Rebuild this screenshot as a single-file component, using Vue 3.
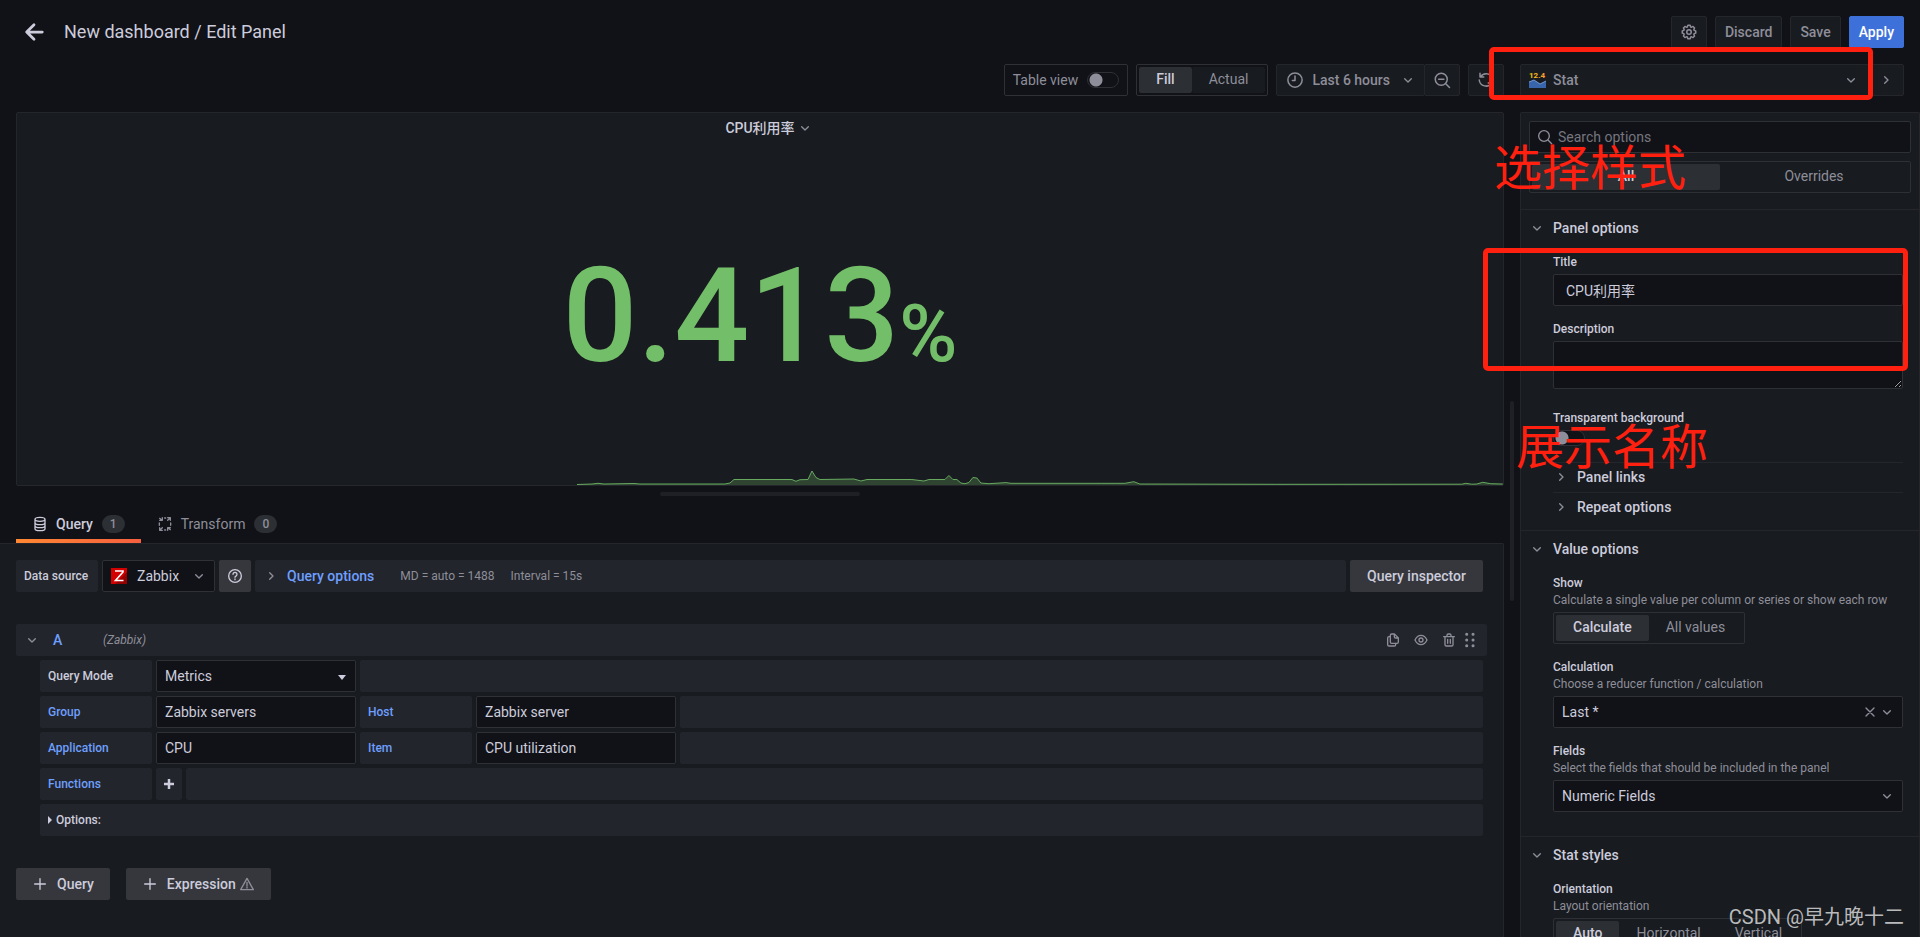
<script setup>
import { h, ref } from 'vue'

const shapes = {
  back: { line: 'M21 12H4M12 4 4 12l8 8', w: 3 },
  down: { line: 'M7 10l5 5 5-5', w: 2 },
  right: { line: 'M10 7l5 5-5 5', w: 2 },
  close: { line: 'M6 6l12 12M18 6 6 18', w: 2 },
  plus: { line: 'M12 4v16M4 12h16', w: 2 },
  clock: { line: 'M12 2.500a9.500 9.500 0 1 0 0 19a9.500 9.500 0 1 0 0-19M12 6.500v6H8.500', w: 2 },
  search: { line: 'M10.500 2.500a8 8 0 1 0 0 16a8 8 0 1 0 0-16M16.500 16.500l5.500 5.500', w: 2 },
  zoomOut: { line: 'M11 3a8 8 0 1 0 0 16a8 8 0 1 0 0-16M17 17l5 5M7.500 11h7', w: 2 },
  sync: { line: 'M4 3v5h5M4.500 8A9 9 0 0 1 20.500 9M20 21v-5h-5M19.500 16A9 9 0 0 1 3 12', w: 2 },
  database: {
    line: 'M12 2c4.500 0 7.500 1.200 7.500 3s-3 3-7.500 3s-7.500-1.200-7.500-3s3-3 7.500-3M4.500 5v14c0 1.800 3 3 7.500 3s7.500-1.200 7.500-3v-14M4.500 10c0 1.800 3 3 7.500 3s7.500-1.200 7.500-3M4.500 14.500c0 1.800 3 3 7.500 3s7.500-1.200 7.500-3',
    w: 2,
  },
  transform: {
    line: 'M8 2.500v4H4M4 3.500l3 3M16 2.500h4v4M20 2.500l-4 4M4 17.500v4h4M4 21.500l4-4M20 20.500l-3-3M16 21.500v-4h4M11.500 3h1.500M3.500 10.500v3.500M20.500 10.500v3.500M11.500 21h1.500',
    w: 2,
  },
  help: {
    line: 'M12 2.500a9.500 9.500 0 1 0 0 19a9.500 9.500 0 1 0 0-19M9 9.500a3 3 0 1 1 4.500 2.600c-1 .6-1.500 1-1.500 1.900M12 16.500v1',
    w: 2,
  },
  warning: { line: 'M12 3.500 2.500 20.500h19zM12 9.500v5M12 16.500v1.500', w: 2 },
  gear: {
    fill: 'M21.32,9.55l-1.89-.63.89-1.78A1,1,0,0,0,20.13,6L18,3.87a1,1,0,0,0-1.15-.19l-1.78.89-.63-1.89A1,1,0,0,0,13.500,2h-3a1,1,0,0,0-.95.68L8.92,4.57,7.14,3.68A1,1,0,0,0,6,3.87L3.87,6a1,1,0,0,0-.19,1.15l.89,1.78-1.89.63A1,1,0,0,0,2,10.500v3a1,1,0,0,0,.68.95l1.89.63-.89,1.78A1,1,0,0,0,3.87,18L6,20.13a1,1,0,0,0,1.15.19l1.78-.89.63,1.89a1,1,0,0,0,.95.68h3a1,1,0,0,0,.95-.68l.63-1.89,1.78.89A1,1,0,0,0,18,20.13L20.13,18a1,1,0,0,0,.19-1.15l-.89-1.78,1.89-.63A1,1,0,0,0,22,13.500v-3A1,1,0,0,0,21.32,9.55ZM20,12.78l-1.2.4A2,2,0,0,0,17.64,16l.57,1.14-1.1,1.1L16,17.64a2,2,0,0,0-2.79,1.16l-.4,1.2H11.22l-.4-1.2A2,2,0,0,0,8,17.64l-1.14.57-1.1-1.1L6.36,16A2,2,0,0,0,5.2,13.18L4,12.78V11.22l1.2-.4A2,2,0,0,0,6.36,8L5.79,6.89l1.1-1.1L8,6.36A2,2,0,0,0,10.82,5.2l.4-1.2h1.56l.4,1.2A2,2,0,0,0,16,6.36l1.14-.57,1.1,1.1L17.64,8a2,2,0,0,0,1.16,2.79l1.2.4ZM12,8a4,4,0,1,0,4,4A4,4,0,0,0,12,8Zm0,6a2,2,0,1,1,2-2A2,2,0,0,1,12,14Z',
  },
  copy: {
    fill: 'M21,8.94a1.31,1.31,0,0,0-.06-.27l0-.09a1.07,1.07,0,0,0-.19-.28h0l-6-6h0a1.07,1.07,0,0,0-.28-.19.32.32,0,0,0-.09,0A.88.88,0,0,0,14.05,2H10A3,3,0,0,0,7,5V6H6A3,3,0,0,0,3,9V19a3,3,0,0,0,3,3h8a3,3,0,0,0,3-3V18h1a3,3,0,0,0,3-3V9S21,9,21,8.94ZM15,5.41,17.59,8H16a1,1,0,0,1-1-1ZM15,19a1,1,0,0,1-1,1H6a1,1,0,0,1-1-1V9A1,1,0,0,1,6,8H7v7a3,3,0,0,0,3,3h5Zm4-4a1,1,0,0,1-1,1H10a1,1,0,0,1-1-1V5a1,1,0,0,1,1-1h3V7a3,3,0,0,0,3,3h3Z',
  },
  eye: {
    fill: 'M21.92,11.6C19.9,6.91,16.1,4,12,4S4.1,6.91,2.08,11.6a1,1,0,0,0,0,.8C4.1,17.09,7.9,20,12,20s7.9-2.91,9.92-7.6A1,1,0,0,0,21.92,11.6ZM12,18c-3.17,0-6.17-2.29-7.9-6C5.83,8.29,8.83,6,12,6s6.17,2.29,7.9,6C18.17,15.71,15.17,18,12,18ZM12,8a4,4,0,1,0,4,4A4,4,0,0,0,12,8Zm0,6a2,2,0,1,1,2-2A2,2,0,0,1,12,14Z',
  },
  trash: {
    fill: 'M10,18a1,1,0,0,0,1-1V11a1,1,0,0,0-2,0v6A1,1,0,0,0,10,18ZM20,6H16V5a3,3,0,0,0-3-3H11A3,3,0,0,0,8,5V6H4A1,1,0,0,0,4,8H5V19a3,3,0,0,0,3,3h8a3,3,0,0,0,3-3V8h1a1,1,0,0,0,0-2ZM10,5a1,1,0,0,1,1-1h2a1,1,0,0,1,1,1V6H10Zm7,14a1,1,0,0,1-1,1H8a1,1,0,0,1-1-1V8H17Zm-3-1a1,1,0,0,0,1-1V11a1,1,0,0,0-2,0v6A1,1,0,0,0,14,18Z',
  },
  drag: {
    line: 'M7 3.500h.1M16.500 3.500h.1M7 12h.1M16.500 12h.1M7 20.500h.1M16.500 20.500h.1',
    w: 4.5,
  },
}

function Icon(props) {
  const s = shapes[props.name]
  const size = props.size || 16
  return h('svg', { width: size, height: size, viewBox: '0 0 24 24', 'aria-hidden': 'true' }, [
    s.fill
      ? h('path', { d: s.fill, fill: 'currentColor' })
      : h('path', {
          d: s.line,
          fill: 'none',
          stroke: 'currentColor',
          'stroke-width': s.w,
          'stroke-linecap': 'round',
          'stroke-linejoin': 'round',
        }),
  ])
}
Icon.props = ['name', 'size']

const tableView = ref(false)
const transparent = ref(false)
const fit = ref('Fill')
const scope = ref('All')
const show = ref('Calculate')
const orientation = ref('Auto')
const title = ref('CPU利用率')
const description = ref('')
const search = ref('')

const queryRows = ref([
  [
    { id: 'group', label: 'Group', value: 'Zabbix servers' },
    { id: 'host', label: 'Host', value: 'Zabbix server' },
  ],
  [
    { id: 'application', label: 'Application', value: 'CPU' },
    { id: 'item', label: 'Item', value: 'CPU utilization' },
  ],
])

const spark =
  '0,14.500 15,14 21,13.300 27,14 57,13.500 63,14 148,14 153,13 157,9.500 215,9.500 219,11.300 223,9.700 231,9.500 235,1 239,7.500 243,9.500 277,9 284,11 290,9.500 335,9.500 347,11 352,9.500 368,9.500 372,5.500 376,9.500 380,9.500 384,13 388,13.700 392,12.500 396,7.500 400,8 404,13 412,13.700 429,12.600 434,13.300 525,13.300 540,13.300 548,13.300 557,11.700 563,14 700,14.300 885,14.200 889,13.300 895,14.200 900,14 906,12.300 914,13.700 926,14'
</script>

<template>
  <div class="editor">
    <header class="top">
      <button class="bare back" aria-label="Go back"><Icon name="back" :size="22" /></button>
      <h1>New dashboard / Edit Panel</h1>
      <div class="actions">
        <button class="btn icon-btn" aria-label="Dashboard settings"><Icon name="gear" :size="18" /></button>
        <button class="btn">Discard</button>
        <button class="btn">Save</button>
        <button class="btn primary">Apply</button>
      </div>
    </header>

    <div class="body">
      <main class="left">
        <div class="toolbar">
          <label class="table-view">Table view <input v-model="tableView" type="checkbox" class="switch" /></label>
          <div class="radios" role="radiogroup" aria-label="Panel size">
            <label v-for="o in ['Fill', 'Actual']" :key="o" class="tinted">
              <input v-model="fit" type="radio" name="fit" :value="o" /><span>{{ o }}</span>
            </label>
          </div>
          <div class="joined">
            <button class="btn time"><Icon name="clock" :size="18" /><span>Last 6 hours</span><Icon name="down" /></button>
            <button class="btn icon-btn" aria-label="Zoom out"><Icon name="zoomOut" :size="18" /></button>
          </div>
          <button class="btn icon-btn" aria-label="Refresh"><Icon name="sync" :size="18" /></button>
        </div>

        <section class="panel">
          <h2>CPU利用率 <Icon name="down" /></h2>
          <div class="value">0.413<small>%</small></div>
          <svg class="spark" viewBox="0 -1 926 16" preserveAspectRatio="none" aria-hidden="true">
            <polygon :points="'0,16 ' + spark + ' 926,16'" fill="#73bf69" fill-opacity="0.25" />
            <polyline :points="spark" fill="none" stroke="#73bf69" stroke-opacity="0.850" />
          </svg>
        </section>

        <div class="tabs-area">
          <div class="handle"></div>
          <nav class="tabs">
            <a href="#query" class="tab active"><Icon name="database" /><span>Query</span><i>1</i></a>
            <a href="#transform" class="tab"><Icon name="transform" /><span>Transform</span><i>0</i></a>
          </nav>
        </div>

        <section class="pane">
          <div class="source-row">
            <label for="ds" class="cell ds-label">Data source</label>
            <div class="pick ds">
              <svg class="zbx" width="16" height="16" viewBox="0 0 16 16" aria-hidden="true">
                <rect width="16" height="16" fill="#d40000" />
                <path d="M4 16 16 4v12z" fill="#970000" />
                <path d="M4 3h8v1L4.500 12.500H12.500" fill="none" stroke="#fff" stroke-width="1.600" />
              </svg>
              <select id="ds"><option>Zabbix</option></select>
              <Icon name="down" class="caret" />
            </div>
            <button class="solid help" aria-label="Data source help"><Icon name="help" /></button>
            <button class="cell options-bar">
              <Icon name="right" /><b>Query options</b><span>MD = auto = 1488</span><span>Interval = 15s</span>
            </button>
            <button class="solid inspector">Query inspector</button>
          </div>

          <div class="query-head">
            <Icon name="down" /><strong>A</strong><em>(Zabbix)</em>
            <div class="tools">
              <button class="bare" aria-label="Duplicate query"><Icon name="copy" /></button>
              <button class="bare" aria-label="Toggle query"><Icon name="eye" /></button>
              <button class="bare" aria-label="Remove query"><Icon name="trash" /></button>
              <Icon name="drag" class="grip" />
            </div>
          </div>

          <div class="query-form">
            <div class="row">
              <label for="mode" class="cell name">Query Mode</label>
              <div class="pick field">
                <select id="mode"><option>Metrics</option></select>
                <span class="tri"></span>
              </div>
              <div class="cell rest"></div>
            </div>
            <div v-for="(row, r) in queryRows" :key="r" class="row">
              <template v-for="f in row" :key="f.id">
                <label :for="f.id" class="cell name blue">{{ f.label }}</label>
                <input :id="f.id" v-model="f.value" type="text" class="box field" />
              </template>
              <div class="cell rest"></div>
            </div>
            <div class="row">
              <span class="cell name blue">Functions</span>
              <button class="cell add" aria-label="Add function">
                <svg width="10" height="10" viewBox="0 0 10 10" aria-hidden="true"><path d="M5 0v10M0 5h10" stroke="currentColor" stroke-width="2.500" /></svg>
              </button>
              <div class="cell rest"></div>
            </div>
            <button class="cell more"><span class="tri side"></span>Options:</button>
          </div>

          <div class="adders">
            <button class="solid"><Icon name="plus" />Query</button>
            <button class="solid"><Icon name="plus" />Expression<Icon name="warning" class="warn" /></button>
          </div>
        </section>
      </main>

      <div class="splitter"><div></div></div>

      <aside class="right">
        <div class="toolbar viz">
          <button class="btn viz-btn">
            <svg width="17" height="17" viewBox="0 0 17 17" aria-hidden="true">
              <defs>
                <linearGradient id="gold"><stop stop-color="#f2cc0c" /><stop offset="1" stop-color="#ff9830" /></linearGradient>
              </defs>
              <text x="0" y="7" font-family="Roboto" font-size="8" font-weight="700" fill="url(#gold)">12.4</text>
              <path d="M0 11l5-2 6 4 6-3v7H0z" fill="#3865ab" />
              <path d="M0 11l5-2 6 4 6-3" fill="none" stroke="#84aff1" stroke-width="0.800" />
            </svg>
            <span>Stat</span><Icon name="down" />
          </button>
          <button class="btn collapse" aria-label="Close options"><Icon name="right" /></button>
        </div>

        <div class="options">
          <div class="filters">
            <div class="search">
              <Icon name="search" />
              <input v-model="search" type="text" class="box" placeholder="Search options" aria-label="Search options" />
            </div>
            <div class="radios full" role="radiogroup" aria-label="Option scope">
              <label v-for="o in ['All', 'Overrides']" :key="o">
                <input v-model="scope" type="radio" name="scope" :value="o" /><span>{{ o }}</span>
              </label>
            </div>
          </div>

          <section class="group">
            <h3><Icon name="down" />Panel options</h3>
            <div class="group-body">
              <div class="item">
                <label for="p-title">Title</label>
                <input id="p-title" v-model="title" type="text" class="box wide" />
              </div>
              <div class="item">
                <label for="p-desc">Description</label>
                <textarea id="p-desc" v-model="description" class="box"></textarea>
              </div>
              <div class="item">
                <label for="p-bg">Transparent background</label>
                <input id="p-bg" v-model="transparent" type="checkbox" class="switch" />
              </div>
              <h4><Icon name="right" />Panel links</h4>
              <h4><Icon name="right" />Repeat options</h4>
            </div>
          </section>

          <section class="group">
            <h3><Icon name="down" />Value options</h3>
            <div class="group-body">
              <div class="item">
                <span class="label">Show</span>
                <p>Calculate a single value per column or series or show each row</p>
                <div class="radios" role="radiogroup" aria-label="Show">
                  <label v-for="o in ['Calculate', 'All values']" :key="o">
                    <input v-model="show" type="radio" name="show" :value="o" /><span>{{ o }}</span>
                  </label>
                </div>
              </div>
              <div class="item">
                <label for="calc">Calculation</label>
                <p>Choose a reducer function / calculation</p>
                <div class="pick">
                  <select id="calc"><option>Last *</option></select>
                  <Icon name="close" class="clear" /><Icon name="down" class="caret" />
                </div>
              </div>
              <div class="item">
                <label for="fields">Fields</label>
                <p>Select the fields that should be included in the panel</p>
                <div class="pick">
                  <select id="fields"><option>Numeric Fields</option></select>
                  <Icon name="down" class="caret" />
                </div>
              </div>
            </div>
          </section>

          <section class="group">
            <h3><Icon name="down" />Stat styles</h3>
            <div class="group-body">
              <div class="item">
                <span class="label">Orientation</span>
                <p>Layout orientation</p>
                <div class="radios" role="radiogroup" aria-label="Orientation">
                  <label v-for="o in ['Auto', 'Horizontal', 'Vertical']" :key="o">
                    <input v-model="orientation" type="radio" name="orientation" :value="o" /><span>{{ o }}</span>
                  </label>
                </div>
              </div>
            </div>
          </section>
        </div>
      </aside>
    </div>

    <div class="mark mark-style"></div>
    <div class="note note-style">选择样式</div>
    <div class="mark mark-name"></div>
    <div class="note note-name">展示名称</div>
    <div class="watermark">CSDN @早九晚十二</div>
  </div>
</template>

<style>
body {
  background: #111217;
}
</style>

<style scoped>
.editor,
.editor * {
  box-sizing: border-box;
}
.editor {
  position: relative;
  display: flex;
  flex-direction: column;
  height: 100vh;
  overflow: hidden;
  background: #111217;
  color: #ccccdc;
  font-family: Roboto, "Noto Sans CJK SC", sans-serif;
  font-size: 14px;
  line-height: 20px;
}
button,
input,
select,
textarea {
  font: inherit;
  color: inherit;
  margin: 0;
}
button {
  cursor: pointer;
  white-space: nowrap;
}
svg {
  flex: none;
  display: block;
}
h1, h2, h3, h4, p {
  margin: 0;
  font-weight: 500;
}
.bare {
  border: 0;
  padding: 0;
  background: none;
  color: inherit;
}
.top {
  display: flex;
  align-items: center;
  padding: 16px 16px 16px 23px;
}
.top h1 {
  margin-left: 19px;
  font-size: 18px;
  font-weight: 400;
}
.actions {
  display: flex;
  gap: 8px;
  margin-left: auto;
}
.btn {
  display: flex;
  align-items: center;
  height: 32px;
  padding: 0 9px 1px;
  border: 1px solid #24262c;
  border-radius: 2px;
  background: #181b1f;
  color: #8e8e9a;
  font-weight: 500;
}
.icon-btn {
  width: 36px;
  padding: 0;
  justify-content: center;
}
.primary {
  border-color: #3d71d9;
  background: #3d71d9;
  color: #fff;
}
.body {
  flex: 1;
  display: flex;
  min-height: 0;
}
.left {
  flex: 1;
  min-width: 0;
  display: flex;
  flex-direction: column;
}
.toolbar {
  display: flex;
  justify-content: flex-end;
  gap: 8px;
  margin-bottom: 16px;
}
.table-view {
  display: flex;
  align-items: center;
  gap: 9px;
  height: 32px;
  padding: 0 8px;
  border: 1px solid #2e3036;
  border-radius: 2px;
  color: #8e8e9a;
}
.switch {
  appearance: none;
  display: block;
  width: 32px;
  height: 16px;
  border: 1px solid #2e3036;
  border-radius: 8px;
  background: radial-gradient(circle at 8px 7px, #8e8e9a 6px, transparent 7px) #111217;
}
.radios {
  display: inline-flex;
  height: 32px;
  padding: 2px;
  border: 1px solid #2e3036;
  border-radius: 2px;
}
.radios label {
  position: relative;
  display: flex;
}
.radios input {
  position: absolute;
  inset: 0;
  opacity: 0;
}
.radios span {
  flex: 1;
  padding: 2px 17px 4px;
  border-radius: 2px;
  color: #8e8e9a;
  text-align: center;
}
.radios .tinted span {
  background: #181b1f;
}
.radios input:checked + span {
  background: #2c2f34;
  color: #ccccdc;
  font-weight: 500;
}
.radios.full {
  display: flex;
}
.full label {
  flex: 1;
}
.joined {
  display: flex;
}
.joined .btn + .btn {
  margin-left: -1px;
}
.time {
  padding-right: 8px;
}
.time span {
  margin: 0 10px 0 8px;
}
.panel {
  flex: 372 1 0;
  min-height: 0;
  display: flex;
  flex-direction: column;
  margin-left: 16px;
  border: 1px solid #24262c;
  border-radius: 2px;
  background: #181b1f;
}
.panel h2 {
  display: flex;
  justify-content: center;
  align-items: center;
  gap: 2px;
  padding: 5px 0 0 18px;
  font-size: 14px;
}
.panel h2 svg,
.query-head > svg,
.group svg,
.options-bar svg {
  color: #8e8e9a;
}
.value {
  flex: 1;
  display: flex;
  align-items: baseline;
  justify-content: center;
  padding-top: 112px;
  color: #73bf69;
  font-size: 132px;
  font-weight: 500;
  line-height: 132px;
}
.value small {
  font-size: 79px;
}
.spark {
  align-self: flex-end;
  width: 62.3%;
  height: 16px;
}
.tabs-area {
  display: flex;
  flex-direction: column;
  height: 57px;
  padding: 6px 0 0 16px;
}
.handle {
  align-self: center;
  width: 200px;
  height: 4px;
  border-radius: 2px;
  background: #1f2025;
}
.tabs {
  display: flex;
  flex: 1;
}
.tab {
  display: flex;
  align-items: center;
  padding: 12px 16px 0;
  color: #8e8e9a;
  text-decoration: none;
  border-bottom: 4px solid transparent;
}
.tab span {
  margin: 0 9px 0 8px;
}
.tab i {
  padding: 0 8px;
  border-radius: 9px;
  background: #2c2f34;
  color: #8e8e9a;
  font-size: 12px;
  font-style: normal;
  font-weight: 500;
  line-height: 18px;
}
.tab.active {
  color: #ccccdc;
  font-weight: 500;
  border-image: linear-gradient(90deg, #ff8833, #f55f3e) 0 0 4 0;
}
.pane {
  flex: 377 1 0;
  min-height: 0;
  padding: 16px 16px 0;
  border: 1px solid #24262c;
  border-width: 1px 1px 0 0;
  border-radius: 0 2px 0 0;
  background: #181b1f;
}
.cell {
  display: flex;
  align-items: center;
  height: 32px;
  padding: 0 8px;
  border: 0;
  border-radius: 2px;
  background: #22252b;
  font-size: 12px;
  font-weight: 500;
}
.source-row,
.row {
  display: flex;
  gap: 4px;
  margin-right: 4px;
}
.ds-label {
  width: 82px;
}
.pick {
  position: relative;
  height: 32px;
}
.pick select,
.box {
  appearance: none;
  display: block;
  width: 100%;
  height: 32px;
  padding: 0 8px;
  border: 1px solid #2e3036;
  border-radius: 2px;
  background: #111217;
  outline: 0;
}
.pick .caret,
.pick .clear,
.pick .tri,
.pick .zbx {
  position: absolute;
  top: 8px;
  right: 8px;
  pointer-events: none;
  color: #8e8e9a;
}
.pick .clear {
  right: 25px;
}
.pick .zbx {
  left: 9px;
}
.ds select {
  width: 113px;
  padding-left: 34px;
}
.solid {
  display: flex;
  align-items: center;
  height: 32px;
  padding: 0 16px 1px;
  border: 0;
  border-radius: 2px;
  background: #35373c;
  font-weight: 500;
}
.help {
  padding: 0 8px;
}
.inspector {
  padding: 0 17px 1px;
}
.options-bar {
  flex: 1;
  font-weight: 400;
  color: #8e8e9a;
}
.options-bar b {
  margin: 0 10px 0 8px;
  color: #6e9fff;
  font-size: 14px;
  font-weight: 500;
}
.options-bar span {
  margin-left: 16px;
}
.query-head {
  display: flex;
  align-items: center;
  height: 32px;
  margin-top: 32px;
  padding: 0 9px 0 8px;
  border-radius: 2px;
  background: #22252b;
}
.query-head strong {
  width: 42px;
  margin-left: 13px;
  color: #6e9fff;
  font-weight: 500;
}
.query-head em {
  margin-left: 8px;
  color: #8e8e9a;
  font-size: 12px;
}
.tools {
  display: flex;
  align-items: center;
  gap: 12px;
  margin-left: auto;
  color: #8e8e9a;
}
.grip {
  margin-left: -7px;
}
.query-form {
  display: flex;
  flex-direction: column;
  gap: 4px;
  margin: 4px 0 0 24px;
}
.name {
  width: 112px;
}
.field {
  width: 200px;
}
.rest {
  flex: 1;
}
.blue {
  color: #6e9fff;
}
.tri {
  width: 0;
  height: 0;
  border: 4px solid transparent;
  border-top: 5px solid #ccccdc;
  border-bottom: 0;
}
.pick .tri {
  top: 15px;
  right: 10px;
}
.side {
  border: 4px solid transparent;
  border-left-color: #ccccdc;
  border-right: 0;
  margin-right: 4px;
}
.more {
  margin-right: 4px;
}
.adders {
  display: flex;
  gap: 16px;
  margin-top: 32px;
}
.adders svg {
  margin-right: 9px;
}
.adders .warn {
  margin: 0 0 0 3px;
  color: #8e8e9a;
}
.splitter {
  width: 16px;
  display: flex;
  align-items: center;
  justify-content: center;
}
.splitter div {
  width: 4px;
  height: 200px;
  border-radius: 2px;
  background: #1f2025;
}
.right {
  width: 400px;
  display: flex;
  flex-direction: column;
}
.viz {
  gap: 0;
  padding-right: 16px;
}
.viz-btn {
  flex: 1;
  gap: 7px;
  padding-left: 8px;
}
.viz-btn span {
  flex: 1;
  text-align: left;
}
.collapse {
  width: 36px;
  margin-left: -1px;
}
.options {
  flex: 1;
  min-height: 0;
  overflow: hidden;
  border: 1px solid #24262c;
  border-bottom: 0;
  border-radius: 2px 2px 0 0;
  background: #181b1f;
}
.filters {
  display: flex;
  flex-direction: column;
  gap: 8px;
  padding: 8px 8px 16px;
}
.search {
  position: relative;
  color: #8e8e9a;
}
.search svg {
  position: absolute;
  top: 8px;
  left: 8px;
}
.search .box {
  padding-left: 28px;
}
.search .box::placeholder {
  color: #76767f;
  opacity: 1;
}
.group {
  border-top: 1px solid #24262c;
}
.group h3 {
  display: flex;
  align-items: center;
  gap: 8px;
  height: 37px;
  padding: 0 0 1px 8px;
  font-size: 14px;
}
.group-body {
  padding: 8px 16px 8px 32px;
}
.item {
  margin-bottom: 16px;
}
.item > label,
.item > .label,
.item p {
  display: block;
  margin-bottom: 4px;
  font-size: 12px;
  font-weight: 500;
  line-height: 15px;
}
.item p {
  margin-top: -2px;
  color: #8e8e9a;
  font-weight: 400;
  white-space: nowrap;
}
.box.wide {
  padding-left: 12px;
}
textarea.box {
  height: 48px;
  margin-bottom: 22px;
  resize: vertical;
}
.group h4 {
  display: flex;
  align-items: center;
  gap: 8px;
  height: 30px;
  padding-bottom: 1px;
  border-top: 1px solid #24262c;
}
.mark,
.note,
.watermark {
  position: absolute;
  pointer-events: none;
}
.mark {
  border: 5px solid #ff2010;
  border-radius: 5px;
}
.mark-style {
  top: 47px;
  right: 47px;
  width: 384px;
  height: 53px;
}
.mark-name {
  top: 248px;
  right: 12px;
  width: 425px;
  height: 123px;
}
.note {
  color: #ff2010;
  font-family: "Noto Sans CJK SC", sans-serif;
  font-size: 48px;
  line-height: 48px;
  white-space: nowrap;
}
.note-style {
  top: 140px;
  right: 234px;
}
.note-name {
  top: 419px;
  right: 212px;
}
.watermark {
  right: 16px;
  bottom: 8px;
  color: #b9babc;
  font-size: 20px;
  line-height: 24px;
}
</style>
